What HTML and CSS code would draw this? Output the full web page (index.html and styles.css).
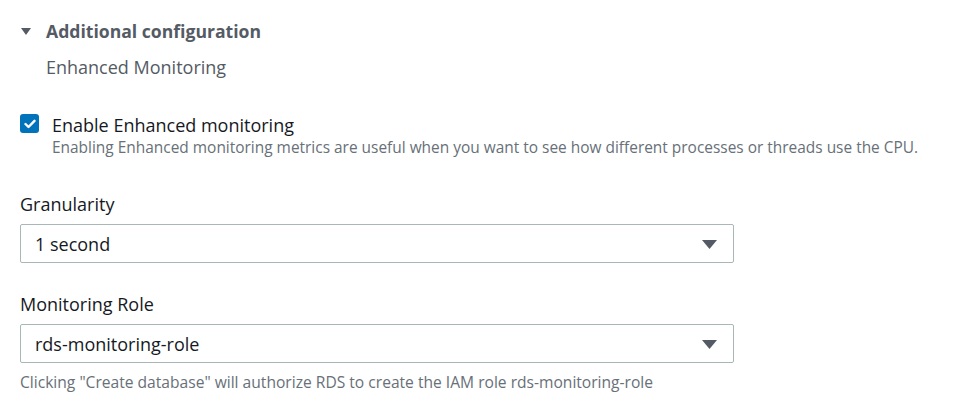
FILE: index.html
```html
<!DOCTYPE html>
<html>
<head>
<meta charset="utf-8">
<link rel="stylesheet" href="styles.css">
</head>
<body>
<div class="panel">
  <div class="expander">
    <svg class="caret" width="10" height="7" viewBox="0 0 10 7"><polygon points="0,0 10,0 5,7" fill="#545b64"/></svg>
    <span class="expander-title">Additional configuration</span>
  </div>
  <div class="section-title">Enhanced Monitoring</div>

  <div class="check-row">
    <span class="checkbox">
      <svg width="12" height="10" viewBox="0 0 12 10"><polyline points="1.5,5 4.5,8 10.5,1.8" fill="none" stroke="#fff" stroke-width="2.4" stroke-linecap="round" stroke-linejoin="round"/></svg>
    </span>
    <div class="check-text">
      <div class="check-label">Enable Enhanced monitoring</div>
      <div class="check-desc">Enabling Enhanced monitoring metrics are useful when you want to see how different processes or threads use the CPU.</div>
    </div>
  </div>

  <div class="field">
    <div class="field-label">Granularity</div>
    <div class="select">
      <span>1 second</span>
      <svg class="arrow" width="15" height="9" viewBox="0 0 15 9"><polygon points="0,0 15,0 7.5,9" fill="#545b64"/></svg>
    </div>
  </div>

  <div class="field">
    <div class="field-label">Monitoring Role</div>
    <div class="select">
      <span>rds-monitoring-role</span>
      <svg class="arrow" width="15" height="9" viewBox="0 0 15 9"><polygon points="0,0 15,0 7.5,9" fill="#545b64"/></svg>
    </div>
    <div class="hint">Clicking "Create database" will authorize RDS to create the IAM role rds-monitoring-role</div>
  </div>
</div>
</body>
</html>
```

FILE: styles.css
```css
html, body {
  margin: 0;
  padding: 0;
  background: #ffffff;
}

body {
  font-family: "Open Sans", "Noto Sans", sans-serif;
  color: #16191f;
}

.panel {
  padding: 18px 20px 0 20px;
  width: 714px;
}

.expander {
  display: flex;
  align-items: center;
  gap: 15px;
  height: 26px;
  padding-left: 1px;
}

.caret {
  display: block;
}

.expander-title {
  font-size: 17.6px;
  font-weight: 700;
  color: #545b64;
}

.section-title {
  margin-top: 10px;
  padding-left: 26px;
  font-size: 18px;
  color: #545b64;
  line-height: 26px;
}

.check-row {
  display: flex;
  align-items: flex-start;
  gap: 13px;
  margin-top: 33px;
  width: 950px;
}

.checkbox {
  width: 19px;
  height: 19px;
  border-radius: 3px;
  background: #0073bb;
  display: flex;
  align-items: center;
  justify-content: center;
  margin-top: 1px;
  flex: none;
}

.check-label {
  font-size: 18px;
  line-height: 24px;
  color: #16191f;
}

.check-desc {
  font-size: 15.45px;
  line-height: 20px;
  color: #687078;
  white-space: nowrap;
}

.field {
  margin-top: 34px;
}

.field + .field {
  margin-top: 28px;
}

.field-label {
  font-size: 18px;
  line-height: 26px;
  color: #16191f;
}

.select {
  margin-top: 7px;
  height: 37px;
  border: 1px solid #aab7b8;
  border-radius: 2px;
  display: flex;
  align-items: center;
  justify-content: space-between;
  padding: 0 16px 0 14px;
  font-size: 18px;
  color: #16191f;
}

.arrow {
  display: block;
  margin-top: 2px;
}

.hint {
  margin-top: 9px;
  font-size: 15.6px;
  line-height: 20px;
  color: #687078;
  white-space: nowrap;
}
```
